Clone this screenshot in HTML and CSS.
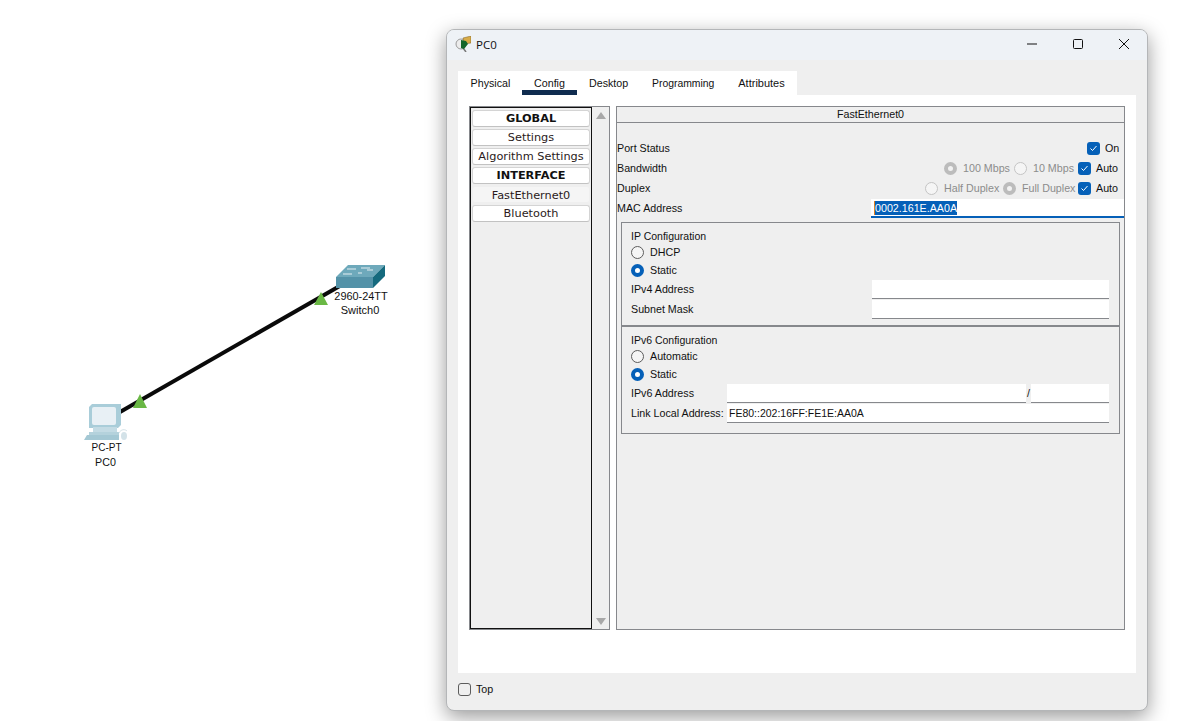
FILE: index.html
```html
<!DOCTYPE html>
<html lang="en">
<head>
    <meta charset="UTF-8">
    <meta name="viewport" content="width=device-width, initial-scale=1.0">
    <title>PC0</title>
    <link rel="stylesheet" href="styles.css">
</head>
<body>
    <!-- Topology canvas -->
    <svg class="cable" width="400" height="480" viewBox="0 0 400 480">
        <line x1="120" y1="412" x2="345" y2="283" stroke="#0a0a0a" stroke-width="4"/>
        <polygon points="140,394 147,408 133,408" fill="#6ab845"/>
        <polygon points="321,292 328,305 314,305" fill="#6ab845"/>
    </svg>

    <div class="node node-switch">
        <svg width="52" height="26" viewBox="0 0 52 26">
            <polygon points="2,13 14,1 51,1 39,13" fill="#6ea9bb"/>
            <polygon points="2,13 39,13 39,24 2,24" fill="#5392a8"/>
            <polygon points="39,13 51,1 51,12 39,24" fill="#156a7e"/>
            <path d="M13 5h9M27 4h9M9 10h9M24 9h4M33 6h6" stroke="#e4eef2" stroke-width="1"/>
        </svg>
        <div class="node-label">2960-24TT</div>
        <div class="node-label">Switch0</div>
    </div>

    <div class="node node-pc">
        <svg width="46" height="37" viewBox="0 0 46 37">
            <polygon points="6,3 9,0 38,0 38,21 35,24 6,24" fill="#a9cdd9"/>
            <rect x="9" y="3" width="24" height="18" rx="2" fill="#e8f0f5"/>
            <rect x="10" y="23" width="24" height="5" fill="#c3dbe4"/>
            <polygon points="6,28 36,28 36,31 6,31" fill="#b4d2dc"/>
            <polygon points="4,31 36,31 36,36 1,36" fill="#a4c8d4"/>
            <path d="M36 29c2-4 6-4 8-2" fill="none" stroke="#d5e2e7"/>
            <ellipse cx="41" cy="32" rx="3" ry="4" fill="#d3e2e8"/>
        </svg>
        <div class="node-label">PC-PT</div>
        <div class="node-label">PC0</div>
    </div>

    <!-- Device window -->
    <div class="window">
        <div class="titlebar">
            <svg class="app-icon" width="16" height="16" viewBox="0 0 16 16">
                <circle cx="6" cy="8" r="5" fill="#ececec" stroke="#9a9a9a"/>
                <path d="M8 12l3 4" stroke="#777" stroke-width="1.5"/>
                <polygon points="8,2 16,0 16,7 9,8" fill="#d8ac48" stroke="#7a5c1c" stroke-width="0.5"/>
                <polygon points="6,4 11,5 13,8 9,13 6,12" fill="#14662a"/>
            </svg>
            <span class="window-title">PC0</span>
            <div class="window-controls">
                <svg width="10" height="10" viewBox="0 0 10 10"><path d="M0 5h10" stroke="#111"/></svg>
                <svg width="10" height="10" viewBox="0 0 10 10"><rect x="0.5" y="0.5" width="9" height="9" rx="1" fill="none" stroke="#111"/></svg>
                <svg width="10" height="10" viewBox="0 0 10 10"><path d="M0 0l10 10M10 0L0 10" stroke="#111"/></svg>
            </div>
        </div>

        <div class="window-body">
            <div class="tabs">
                <div class="tab tab-physical">Physical</div>
                <div class="tab tab-config active">Config</div>
                <div class="tab tab-desktop">Desktop</div>
                <div class="tab tab-programming">Programming</div>
                <div class="tab tab-attributes">Attributes</div>
            </div>

            <div class="tab-page">
                <div class="sidebar">
                    <div class="side-list">
                        <div class="side-btn heading">GLOBAL</div>
                        <div class="side-btn">Settings</div>
                        <div class="side-btn">Algorithm Settings</div>
                        <div class="side-btn heading">INTERFACE</div>
                        <div class="side-btn current">FastEthernet0</div>
                        <div class="side-btn">Bluetooth</div>
                    </div>
                    <div class="scrollbar">
                        <span class="arrow-up"></span>
                        <span class="arrow-down"></span>
                    </div>
                </div>

                <div class="panel">
                    <div class="panel-header">FastEthernet0</div>
                    <div class="panel-rows">
                        <div class="row">
                            <span>Port Status</span>
                            <div class="opts">
                                <span class="check"><svg width="9" height="9" viewBox="0 0 9 9"><path d="M1.5 4.5l2 2 4-4.5" fill="none" stroke="#fff"/></svg></span>
                                <span class="opt-on">On</span>
                            </div>
                        </div>
                        <div class="row">
                            <span>Bandwidth</span>
                            <div class="opts">
                                <span class="radio off-on"></span><span class="opt-dim dim-100">100 Mbps</span>
                                <span class="radio off"></span><span class="opt-dim dim-10">10 Mbps</span>
                                <span class="check"><svg width="9" height="9" viewBox="0 0 9 9"><path d="M1.5 4.5l2 2 4-4.5" fill="none" stroke="#fff"/></svg></span>
                                <span class="opt-auto">Auto</span>
                            </div>
                        </div>
                        <div class="row">
                            <span>Duplex</span>
                            <div class="opts">
                                <span class="radio off"></span><span class="opt-dim dim-half">Half Duplex</span>
                                <span class="radio off-on"></span><span class="opt-dim dim-full">Full Duplex</span>
                                <span class="check"><svg width="9" height="9" viewBox="0 0 9 9"><path d="M1.5 4.5l2 2 4-4.5" fill="none" stroke="#fff"/></svg></span>
                                <span class="opt-auto">Auto</span>
                            </div>
                        </div>
                        <div class="row mac-row">
                            <span>MAC Address</span>
                            <div class="mac-input"><span class="selected">0002.161E.AA0A</span></div>
                        </div>
                    </div>

                    <div class="ip-box">
                        <div class="ip-section ip-v4">
                            <div class="ip-title">IP Configuration</div>
                            <div class="radio-row"><span class="radio plain"></span>DHCP</div>
                            <div class="radio-row"><span class="radio on"></span>Static</div>
                            <div class="field-row"><span class="field-label">IPv4 Address</span><div class="field"></div></div>
                            <div class="field-row"><span class="field-label">Subnet Mask</span><div class="field"></div></div>
                        </div>
                        <div class="ip-section ip-v6">
                            <div class="ip-title">IPv6 Configuration</div>
                            <div class="radio-row"><span class="radio plain"></span>Automatic</div>
                            <div class="radio-row"><span class="radio on"></span>Static</div>
                            <div class="field-row">
                                <span class="field-label-v6">IPv6 Address</span>
                                <div class="field field-v6"></div>
                                <span class="slash">/</span>
                                <div class="field field-prefix"></div>
                            </div>
                            <div class="field-row">
                                <span class="field-label-v6">Link Local Address:</span>
                                <div class="field field-link">FE80::202:16FF:FE1E:AA0A</div>
                            </div>
                        </div>
                    </div>
                </div>
            </div>

            <div class="window-footer">
                <span class="top-check"></span>
                <span>Top</span>
            </div>
        </div>
    </div>
</body>
</html>
```

FILE: styles.css
```css
/* General */
html, body {
    margin: 0;
    padding: 0;
    height: 721px;
    overflow: hidden;
    background-color: #fff;
    font-family: "Liberation Sans", Arial, sans-serif;
    font-size: 10.7px;
    color: #111;
}

/* Topology canvas */
.cable {
    position: absolute;
    left: 0;
    top: 0;
}

.node {
    position: absolute;
    text-align: center;
}

.node svg {
    display: block;
}

.node-switch {
    left: 334px;
    top: 264px;
    width: 52px;
}

.node-switch .node-label {
    padding-left: 2px;
}

.node-switch .node-label:first-of-type {
    margin-top: -1px;
    font-size: 10.9px;
}

.node-switch .node-label:last-of-type {
    font-size: 11px;
    padding-left: 0;
}

.node-pc {
    left: 83px;
    top: 404px;
    width: 46px;
}

.node-pc .node-label:first-of-type {
    font-size: 10px;
    padding-left: 1px;
}

.node-pc .node-label:last-of-type {
    padding-right: 1px;
}

.node-label {
    line-height: 14px;
    white-space: nowrap;
    margin: 0 -10px;
}

/* Window */
.window {
    position: absolute;
    left: 446px;
    top: 29px;
    width: 702px;
    height: 682px;
    box-sizing: border-box;
    border: 1px solid #b4b6b8;
    border-radius: 8px;
    background-color: #efefef;
    box-shadow: 0 6px 20px rgba(0, 0, 0, 0.4);
    display: flex;
    flex-direction: column;
    overflow: hidden;
}

.titlebar {
    height: 30px;
    box-sizing: border-box;
    flex: none;
    display: flex;
    align-items: center;
    background-color: #eef2f6;
    padding: 0 0 2px 8px;
}

.app-icon {
    margin-right: 5px;
}

.window-title {
    font-family: "Open Sans", sans-serif;
    font-size: 11.5px;
}

.window-controls {
    margin-left: auto;
    display: flex;
    align-items: center;
    gap: 36px;
    padding-right: 18px;
}

.window-controls svg {
    width: 10px;
    height: 10px;
}

.window-body {
    flex: 1;
    display: flex;
    flex-direction: column;
    padding: 11px 11px 0 11px;
}

/* Tabs */
.tabs {
    display: flex;
    align-self: flex-start;
    height: 24px;
    background-color: #fff;
    box-sizing: border-box;
    width: 339px;
    flex: none;
}

.tab {
    line-height: 24px;
    white-space: nowrap;
    flex: none;
    text-align: center;
}

.tab-physical { margin-left: 12px; width: 41px; }
.tab-config {
    margin-left: 11px;
    width: 55px;
    height: 24px;
    box-sizing: border-box;
    border-bottom: 5px solid #0f2c4f;
}
.tab-desktop { margin-left: 12px; width: 39px; }
.tab-programming { margin-left: 24px; width: 62px; font-size: 10.4px; line-height: 26px; }
.tab-attributes { margin-left: 24px; width: 47px; font-size: 11px; }

.tab-page {
    height: 578px;
    flex: none;
    box-sizing: border-box;
    background-color: #fff;
    padding: 11px 11px 43px 11px;
    display: flex;
    gap: 6px;
}

/* Left list */
.sidebar {
    width: 141px;
    flex: none;
    box-sizing: border-box;
    border: 1px solid #86888c;
    display: flex;
    background-color: #efefef;
}

.side-list {
    width: 122px;
    flex: none;
    box-sizing: border-box;
    border: 1px solid #111;
    padding: 2px 1px 1px 1px;
    display: flex;
    flex-direction: column;
    gap: 2px;
}

.side-btn {
    height: 15px;
    line-height: 15px;
    background-color: #fff;
    border: 1px solid #d4d4d4;
    border-bottom: 1px solid #c2c2c2;
    border-radius: 3px;
    text-align: center;
    font-family: "DejaVu Sans", Verdana, sans-serif;
    font-size: 11.3px;
    color: #2a1a1a;
    white-space: nowrap;
}

.side-btn.heading {
    font-weight: bold;
    color: #111;
}

.side-btn.current {
    background-color: #f5f5f5;
    border-color: #efefef;
    line-height: 17px;
}

.scrollbar {
    flex: 1;
    position: relative;
}

.arrow-up, .arrow-down {
    position: absolute;
    left: 4px;
    width: 0;
    height: 0;
    border-left: 5px solid transparent;
    border-right: 5px solid transparent;
}

.arrow-up {
    top: 5px;
    border-bottom: 7px solid #a8a8a8;
}

.arrow-down {
    bottom: 4px;
    border-top: 7px solid #a8a8a8;
}

/* Right panel */
.panel {
    flex: 1;
    box-sizing: border-box;
    border: 1px solid #86888c;
    background-color: #efefef;
}

.panel-header {
    height: 15px;
    line-height: 15px;
    text-align: center;
    border-bottom: 1px solid #86888c;
}

.panel-rows {
    padding-top: 15px;
}

.row {
    height: 20px;
    display: flex;
    align-items: center;
    justify-content: space-between;
    padding: 0 5px 0 0;
}

.opts {
    display: flex;
    align-items: center;
}

.opt-dim {
    color: #8c8c8c;
    margin: 0 4px 0 6px;
    white-space: nowrap;
}

.dim-100 { width: 47px; }
.dim-10 { width: 41px; }
.dim-half { width: 55px; }
.dim-full { width: 52px; }
.opt-auto { margin-left: 5px; width: 23px; }
.opt-on { margin-left: 5px; width: 14px; }

.check {
    width: 13px;
    height: 13px;
    border-radius: 3px;
    background-color: #0560b8;
    display: flex;
    align-items: center;
    justify-content: center;
}

.radio {
    width: 13px;
    height: 13px;
    flex: none;
    box-sizing: border-box;
    border-radius: 50%;
    display: inline-block;
    background-color: #f5f5f5;
}

.radio.off {
    border: 1px solid #c4c4c4;
}

.radio.off-on {
    background-color: #f2f2f2;
    border: 4px solid #bcbcbc;
}

.radio.plain {
    border: 1px solid #5c5c5c;
}

.radio.on {
    background-color: #fff;
    border: 4px solid #0560b8;
}

.mac-row {
    padding-right: 0;
}

.mac-input {
    width: 253px;
    height: 19px;
    align-self: flex-end;
    line-height: 18px;
    box-sizing: border-box;
    background-color: #fff;
    border-bottom: 2px solid #0560b8;
    padding-left: 3px;
}

.selected {
    background-color: #0560b8;
    color: #fff;
    display: inline-block;
    line-height: 14px;
    border-left: 1px solid #e08020;
}

/* IP sections */
.ip-box {
    margin: 4px 4px 0 4px;
    box-sizing: border-box;
    border: 1px solid #86888c;
}

.ip-section {
    padding: 7px 10px 0 9px;
}

.ip-v4 {
    height: 104px;
    box-sizing: border-box;
    border-bottom: 2px solid #86888c;
}

.ip-v6 {
    height: 106px;
    box-sizing: border-box;
}

.ip-title {
    line-height: 13px;
    font-size: 10.5px;
}

.radio-row {
    height: 18px;
    display: flex;
    align-items: center;
    gap: 6px;
}

.field-row {
    height: 20px;
    display: flex;
    align-items: center;
}

.field-label {
    width: 241px;
    flex: none;
}

.field-label-v6 {
    width: 96px;
    flex: none;
    white-space: nowrap;
}

.field {
    height: 19px;
    line-height: 19px;
    box-sizing: border-box;
    background-color: #fff;
    border-bottom: 1px solid #86888c;
    flex: 1;
    padding-left: 2px;
}

.field-link {
    font-size: 10.5px;
}

.field-v6 {
    flex: none;
    width: 299px;
}

.slash {
    width: 5px;
    text-align: center;
}

.field-prefix {
    flex: none;
    width: 78px;
}

/* Footer */
.window-footer {
    flex: 1;
    display: flex;
    align-items: center;
    gap: 5px;
    padding-bottom: 5px;
}

.top-check {
    width: 13px;
    height: 13px;
    box-sizing: border-box;
    border: 1px solid #5c5c5c;
    border-radius: 3px;
}
```
